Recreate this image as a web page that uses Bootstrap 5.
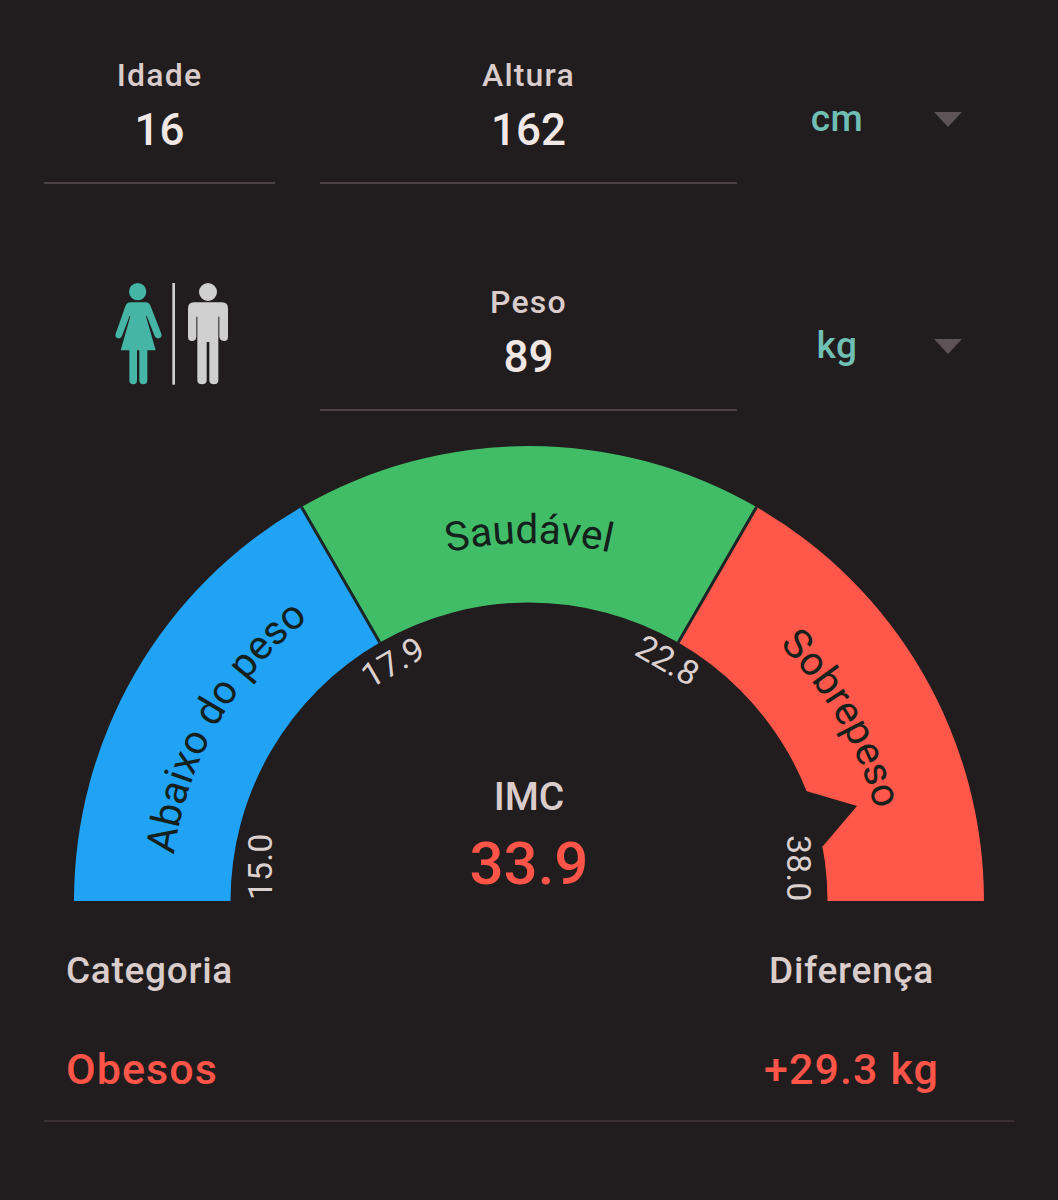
<!DOCTYPE html>
<html lang="pt">
<head>
<meta charset="utf-8">
<title>IMC</title>
<link href="https://cdn.jsdelivr.net/npm/bootstrap@5.3.0/dist/css/bootstrap.min.css" rel="stylesheet">
<style>
html,body{background:#211c1d;}
body{font-family:Roboto,"Liberation Sans",sans-serif;color:#e0d5d3;width:1058px;height:1200px;overflow:hidden;}
.top-pad{padding:55px 44px 0 44px;}
.form-row{gap:45px;}
.form-row+.form-row{margin-top:98px;}
.field-a{width:231px;flex:none;}
.field-b{width:417px;flex:none;}
.field-box{height:129px;border-bottom:2px solid #4d4345;}
.f-label{font-size:32px;font-weight:500;letter-spacing:1.2px;line-height:40px;color:#d9cccb;}
.f-value{font-size:44px;font-weight:500;line-height:48px;margin-top:11px;color:#f1e8e6;}
.unit-box{margin-top:44px;margin-left:-5px;}
.unit-text{width:120px;font-size:37px;font-weight:500;letter-spacing:.5px;line-height:40px;color:#6fbfb5;}
.caret-shape{width:0;height:0;margin-left:37px;border-left:14px solid transparent;border-right:14px solid transparent;border-top:15px solid #5e5356;}
.gender-box{height:129px;}
.gender-icon{display:block;width:160px;height:130px;margin-top:-12px;margin-left:20px;}
.gauge-svg{display:block;width:1058px;height:470px;margin-top:29px;}
.g-seg{font-family:Roboto,"Liberation Sans",sans-serif;font-size:40.5px;font-weight:400;fill:#14201c;}
.g-tick{font-family:Roboto,"Liberation Sans",sans-serif;font-size:34px;font-weight:400;fill:#dcd0ce;}
.g-title{font-family:Roboto,"Liberation Sans",sans-serif;font-size:39px;font-weight:500;fill:#d9cccb;}
.g-num{font-family:Roboto,"Liberation Sans",sans-serif;font-size:60px;font-weight:500;fill:#ff5549;}
.result-wrap{margin:41px 44px 0 44px;padding:0 75px 31px 22px;border-bottom:2px solid #3a3032;}
.r-label{font-size:37px;font-weight:500;letter-spacing:.7px;line-height:40px;color:#d9cccb;}
.r-value{font-size:43px;font-weight:500;letter-spacing:1.1px;line-height:40px;margin-top:58px;color:#ff5549;}
</style>
</head>
<body>
<div class="top-pad">
  <div class="d-flex form-row">
    <div class="field-a field-box text-center">
      <div class="f-label">Idade</div>
      <div class="f-value">16</div>
    </div>
    <div class="field-b field-box text-center">
      <div class="f-label">Altura</div>
      <div class="f-value">162</div>
    </div>
    <div class="d-flex align-items-center align-self-start unit-box">
      <div class="unit-text text-center">cm</div>
      <div class="caret-shape"></div>
    </div>
  </div>
  <div class="d-flex form-row">
    <div class="field-a gender-box d-flex justify-content-center">
      <svg class="gender-icon" viewBox="0 0 480 390" aria-hidden="true">
        <g fill="#45b5a6">
          <circle cx="143" cy="65" r="26"/>
          <path d="M122 97H166Q178 97 182 109L214 191Q217 202 207 205Q198 207 194 198L170 137L168 139L197 241H172V331Q172 343 160 343Q148 343 148 331V241H141V331Q141 343 130 343Q118 343 118 331V241H92L121 139L119 137L96 198Q92 207 84 205Q74 202 77 191L106 109Q110 97 122 97Z"/>
        </g>
        <rect x="247" y="39" width="8" height="305" fill="#cfcfcf"/>
        <g fill="#cfcfcf">
          <circle cx="354" cy="66" r="27"/>
          <path d="M312 97H396Q414 97 414 115V201Q414 213 403 213Q390 213 388 201V140H385V331Q385 343 372 343Q358 343 358 331V216H350V331Q350 343 336 343Q322 343 322 331V140H319V201Q318 213 306 213Q294 213 294 201V115Q294 97 312 97Z"/>
        </g>
      </svg>
    </div>
    <div class="field-b field-box text-center">
      <div class="f-label">Peso</div>
      <div class="f-value">89</div>
    </div>
    <div class="d-flex align-items-center align-self-start unit-box">
      <div class="unit-text text-center">kg</div>
      <div class="caret-shape"></div>
    </div>
  </div>
</div>

<svg class="gauge-svg" viewBox="0 440 1058 470" role="img" aria-label="Indicador de IMC">
  <defs>
    <path id="arc-base2" d="M171 901A358 358 0 0 1 887 901"/>
  </defs>
  <path d="M74 901A455 455 0 0 1 301.5 507L379.75 642.5A298.5 298.5 0 0 0 230.5 901Z" fill="#21a3f5"/>
  <path d="M301.5 507A455 455 0 0 1 756.5 507L678.25 642.5A298.5 298.5 0 0 0 379.75 642.5Z" fill="#41bd68"/>
  <path d="M756.5 507A455 455 0 0 1 984 901H827.5A298.5 298.5 0 0 0 678.25 642.5Z" fill="#ff574a"/>
  <path d="M301.5 507L379.75 642.5M756.5 507L678.25 642.5" stroke="#1b2427" stroke-width="3" fill="none"/>
  <path d="M806 791L857 806L823 846L800 850Z" fill="#211c1d"/>
  <text class="g-seg" text-anchor="middle"><textPath href="#arc-base2" startOffset="16.5%">Abaixo do peso</textPath></text>
  <text class="g-seg" text-anchor="middle"><textPath href="#arc-base2" startOffset="50%">Saudável</textPath></text>
  <text class="g-seg" text-anchor="middle"><textPath href="#arc-base2" startOffset="83.2%">Sobrepeso</textPath></text>
  <text class="g-tick" transform="translate(272 900) rotate(-90)">15.0</text>
  <text class="g-tick" transform="translate(370 689) rotate(-30)">17.9</text>
  <text class="g-tick" transform="translate(633 654) rotate(30)">22.8</text>
  <text class="g-tick" transform="translate(787 835) rotate(90)">38.0</text>
  <text class="g-title" x="529" y="810" text-anchor="middle">IMC</text>
  <text class="g-num" x="529" y="884" text-anchor="middle">33.9</text>
</svg>

<div class="result-wrap d-flex justify-content-between">
  <div>
    <div class="r-label">Categoria</div>
    <div class="r-value">Obesos</div>
  </div>
  <div class="text-center">
    <div class="r-label">Diferença</div>
    <div class="r-value">+29.3 kg</div>
  </div>
</div>
</body>
</html>
